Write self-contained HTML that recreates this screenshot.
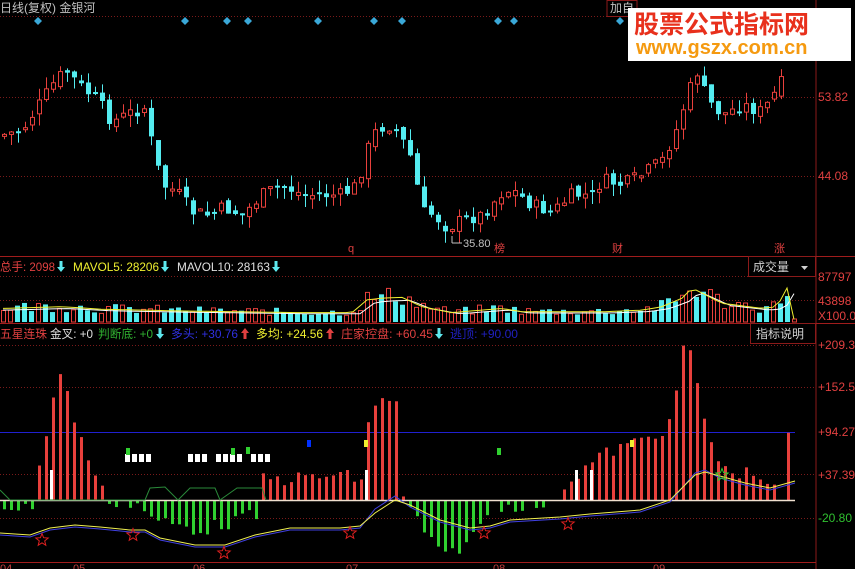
<!DOCTYPE html>
<html><head><meta charset="utf-8"><style>
html,body{margin:0;padding:0;background:#000;width:855px;height:569px;overflow:hidden}
svg{display:block}
text{font-family:"Liberation Sans","Noto Sans CJK SC",sans-serif}
</style></head><body>
<svg id="s" width="855" height="569" xmlns="http://www.w3.org/2000/svg">
<rect width="855" height="569" fill="#000"/>
<line x1="816" y1="0" x2="816" y2="569" stroke="#8b1a1a"/>
<line x1="0" y1="256.5" x2="855" y2="256.5" stroke="#a01c1c"/>
<line x1="0" y1="323.5" x2="855" y2="323.5" stroke="#a01c1c"/>
<line x1="0" y1="562.5" x2="816" y2="562.5" stroke="#a01c1c"/>
<g stroke="#7a1a1a" stroke-dasharray="1,2">
<line x1="0" y1="16.5" x2="816" y2="16.5"/>
<line x1="0" y1="97.5" x2="816" y2="97.5"/>
<line x1="0" y1="176.5" x2="816" y2="176.5"/>
<line x1="0" y1="276.5" x2="816" y2="276.5"/>
<line x1="0" y1="300.5" x2="816" y2="300.5"/>
<line x1="0" y1="345.5" x2="816" y2="345.5"/>
<line x1="0" y1="387.5" x2="816" y2="387.5"/>
<line x1="0" y1="474.5" x2="816" y2="474.5"/>
<line x1="0" y1="518.5" x2="816" y2="518.5"/>
</g>
<line x1="0" y1="432.5" x2="795" y2="432.5" stroke="#2020d0"/>
<g id="dyn"></g>
<text x="0" y="12" font-size="12" fill="#c0c0c0">日线(复权)  金银河</text>
<text x="610" y="12" font-size="12" fill="#c0c0c0">加自</text>
<rect x="607" y="0.5" width="30" height="16" fill="none" stroke="#8b1a1a"/>
<g font-size="12" fill="#e04040">
<text x="818" y="101">53.82</text>
<text x="818" y="180">44.08</text>
<text x="818" y="281">87797</text>
<text x="818" y="305">43898</text>
<text x="818" y="320">X100.0</text>
<text x="818" y="349">+209.3</text>
<text x="818" y="391">+152.5</text>
<text x="818" y="436">+94.27</text>
<text x="818" y="479">+37.39</text>
</g>
<text x="818" y="522" font-size="12" fill="#30c030">-20.80</text>
<text x="463" y="247" font-size="11" fill="#c0c0c0">35.80</text>
<line x1="452" y1="243" x2="462" y2="243" stroke="#c0c0c0"/>
<line x1="452" y1="236" x2="452" y2="243" stroke="#c0c0c0"/>
<g font-size="11" fill="#e04040">
<text x="348" y="252">q</text><text x="494" y="252">榜</text><text x="612" y="252">财</text><text x="774" y="252">涨</text>
</g>
<rect x="748.5" y="256.5" width="67" height="20" fill="none" stroke="#8b1a1a"/>
<text x="753" y="271" font-size="12" fill="#d0d0d0">成交量</text>
<path d="M801 266h7l-3.5 4z" fill="#d0d0d0"/>
<rect x="750.5" y="323.5" width="65" height="20" fill="none" stroke="#8b1a1a"/>
<text x="756" y="338" font-size="12" fill="#d0d0d0">指标说明</text>
<g font-size="12" lengthAdjust="spacingAndGlyphs">
<text x="0" y="271" fill="#e04040" textLength="55" lengthAdjust="spacingAndGlyphs">总手: 2098</text>
<text x="73" y="271" fill="#f0f030" textLength="86" lengthAdjust="spacingAndGlyphs">MAVOL5: 28206</text>
<text x="177" y="271" fill="#e0e0e0" textLength="93" lengthAdjust="spacingAndGlyphs">MAVOL10: 28163</text>
<text x="0" y="338" fill="#e04040" textLength="47" lengthAdjust="spacingAndGlyphs">五星连珠</text>
<text x="50" y="338" fill="#e0e0e0" textLength="43" lengthAdjust="spacingAndGlyphs">金叉: +0</text>
<text x="98" y="338" fill="#30b030" textLength="55" lengthAdjust="spacingAndGlyphs">判断底: +0</text>
<text x="171" y="338" fill="#3030e0" textLength="67" lengthAdjust="spacingAndGlyphs">多头: +30.76</text>
<text x="256" y="338" fill="#f0f030" textLength="67" lengthAdjust="spacingAndGlyphs">多均: +24.56</text>
<text x="341" y="338" fill="#e04040" textLength="92" lengthAdjust="spacingAndGlyphs">庄家控盘: +60.45</text>
<text x="450" y="338" fill="#2020c0" textLength="68" lengthAdjust="spacingAndGlyphs">逃顶: +90.00</text>
</g>
<g font-size="11" fill="#c04040">
<text x="0" y="572">04</text><text x="73" y="572">05</text><text x="193" y="572">06</text><text x="346" y="572">07</text><text x="493" y="572">08</text><text x="653" y="572">09</text>
</g>
<rect x="628" y="8" width="223" height="53" fill="#fff"/>
<text x="634" y="33" font-size="25" font-weight="bold" fill="#e8301c" font-family="'Noto Sans CJK SC',sans-serif">股票公式指标网</text>
<text x="636" y="54" font-size="20" font-weight="bold" fill="#f59a10">www.gszx.com.cn</text>
</svg>
<script>
var g=document.getElementById('dyn'),h='';
var seed=7;function r(){seed=(seed*9301+49297)%233280;return seed/233280;}
function interp(pts,x){for(var i=0;i<pts.length-1;i++){if(x>=pts[i][0]&&x<=pts[i+1][0]){var t=(x-pts[i][0])/(pts[i+1][0]-pts[i][0]);return pts[i][1]+t*(pts[i+1][1]-pts[i][1]);}}return pts[x<pts[0][0]?0:pts.length-1][1];}
function arrow(x,y,up,c){ // y = baseline-ish center
 if(up)return '<path d="M'+(x+3)+' '+(y-10)+'l4 5h-2.5v6h-3v-6h-2.5z" fill="'+c+'"/>';
 return '<path d="M'+(x+3)+' '+(y+1)+'l4 -5h-2.5v-6h-3v6h-2.5z" fill="'+c+'"/>';}
h+=arrow(58,271,0,'#5ee8ee')+arrow(162,271,0,'#5ee8ee')+arrow(273,271,0,'#5ee8ee');
h+=arrow(157,338,0,'#5ee8ee')+arrow(242,338,1,'#e04040')+arrow(327,338,1,'#e04040')+arrow(436,338,0,'#5ee8ee');
[38,185,227,248,318,374,402,498,514,620].forEach(function(x){h+='<path d="M'+x+' 17l4 4-4 4-4-4z" fill="#3aa8d8"/>';});
var price=[[0,135],[20,130],[40,100],[55,78],[65,72],[80,88],[95,100],[110,122],[130,112],[142,108],[150,145],[160,185],[175,192],[190,212],[205,215],[222,208],[240,215],[260,195],[280,185],[300,195],[320,195],[340,195],[355,185],[365,150],[375,128],[390,125],[400,140],[410,160],[420,212],[432,215],[445,228],[460,220],[480,215],[500,192],[510,190],[530,205],[550,212],[570,195],[590,195],[600,180],[620,185],[640,175],[660,160],[675,128],[685,95],[695,72],[705,100],[720,115],[740,105],[760,112],[780,82]];
var prev=135;
for(var x=2;x<=780;x+=7){var c=interp(price,x)+(r()-0.5)*14;var o=prev+(r()-0.5)*8;var up=c<o;var col=up?'#e8403c':'#54ecf0';var t=Math.min(o,c),b=Math.max(o,c);if(b-t<2)b=t+2;var hi=t-r()*12,lo=b+r()*12;
h+='<line x1="'+(x+2.5)+'" y1="'+hi+'" x2="'+(x+2.5)+'" y2="'+lo+'" stroke="'+col+'"/>';
if(up)h+='<rect x="'+(x+0.5)+'" y="'+t+'" width="4" height="'+(b-t)+'" fill="#000" stroke="'+col+'"/>';else h+='<rect x="'+x+'" y="'+t+'" width="5" height="'+(b-t)+'" fill="'+col+'"/>';prev=c;}
var vol=[[0,16],[60,18],[100,15],[180,13],[300,11],[350,11],[365,26],[380,28],[400,29],[420,18],[450,11],[500,16],[520,12],[600,12],[640,14],[660,18],[680,28],[690,40],[700,34],[720,22],[760,16],[775,18],[785,40],[792,3]];
var my=[],mw=[];
for(var x=1;x<=792;x+=7){var v=interp(vol,x)*(0.55+r()*0.7);var up=r()>0.5;var col=up?'#e8403c':'#54ecf0';
if(up)h+='<rect x="'+(x+0.5)+'" y="'+(322-v)+'" width="4" height="'+v+'" fill="none" stroke="'+col+'"/>';else h+='<rect x="'+x+'" y="'+(322-v)+'" width="5" height="'+v+'" fill="'+col+'"/>';
my.push([x+2,322-interp(vol,x)*0.85]);mw.push([x+2,322-interp(vol,x-8)*0.75]);}
function pl(a,c){return '<polyline points="'+a.map(function(p){return p[0]+','+p[1].toFixed(1)}).join(' ')+'" fill="none" stroke="'+c+'"/>';}
h+=pl(mw,'#ffffff')+pl(my,'#f0f030');
var ind=[[0,505],[30,510],[36,475],[58,370],[80,440],[100,490],[108,500],[140,505],[150,520],[200,530],[255,515],[262,480],[300,478],[340,475],[362,480],[368,415],[380,395],[395,405],[402,500],[410,510],[440,558],[470,540],[490,505],[550,505],[568,480],[600,455],[640,440],[670,425],[682,345],[690,355],[700,410],[720,470],[760,475],[780,500],[786,435],[793,455]];
for(var x=3;x<=793;x+=7){var y=interp(ind,x)+(r()-0.5)*14;if(Math.abs(y-500)<3)continue;var col=y<500?'#e8403c':'#30d030';var t=Math.min(y,500),b=Math.max(y,500);h+='<rect x="'+x+'" y="'+t+'" width="3" height="'+(b-t)+'" fill="'+col+'"/>';}
h+='<line x1="0" y1="500.5" x2="795" y2="500.5" stroke="#f0e0d0" stroke-width="1.5"/>';
[[50,470,500],[365,470,500],[575,470,500],[590,470,500]].forEach(function(a){h+='<rect x="'+a[0]+'" y="'+a[1]+'" width="3" height="'+(a[2]-a[1])+'" fill="#fff"/>';});
[125,132,139,146,188,195,202,216,223,230,237,251,258,265].forEach(function(x){h+='<rect x="'+x+'" y="454" width="5" height="8" fill="#fff"/>';});
[[126,448,'#30d030'],[231,448,'#30d030'],[246,447,'#30d030'],[307,440,'#0030ff'],[364,440,'#f0f030'],[497,448,'#30d030'],[630,440,'#f0f030']].forEach(function(a){h+='<rect x="'+a[0]+'" y="'+a[1]+'" width="4" height="7" fill="'+a[2]+'"/>';});
h+='<polyline points="0,490 10,500 145,500 150,488 165,487 178,500 190,488 215,488 220,500 237,488 262,488 266,500" fill="none" stroke="#2a8a3a"/>';
var ma=[[0,533],[30,535],[50,528],[75,525],[100,527],[130,530],[145,530],[160,538],[195,545],[225,545],[255,535],[290,528],[340,528],[360,526],[375,513],[395,500],[410,505],[440,520],[470,528],[490,526],[510,520],[560,517],[590,514],[640,510],[670,500],[695,475],[705,472],[720,476],[745,483],[770,488],[795,481]];
var ma2=ma.map(function(p){return [p[0],p[1]+(p[0]>360&&p[0]<400?-4:2)+(p[0]>680&&p[0]<720?-4:0)];});
h+=pl(ma2,'#4040e0')+pl(ma,'#f0f050');
function star(cx,cy,c){var s='';for(var i=0;i<10;i++){var a=Math.PI/5*i-Math.PI/2,rr=i%2?2.8:6.5;s+=(cx+rr*Math.cos(a)).toFixed(1)+','+(cy+rr*Math.sin(a)).toFixed(1)+' ';}return '<polygon points="'+s+'" fill="none" stroke="'+c+'"/>';}
[[42,540],[133,535],[224,553],[350,533],[484,533],[568,524]].forEach(function(a){h+=star(a[0],a[1],'#e02020');});
h+=star(722,475,'#30d030');
g.innerHTML=h;
</script>
</body></html>
